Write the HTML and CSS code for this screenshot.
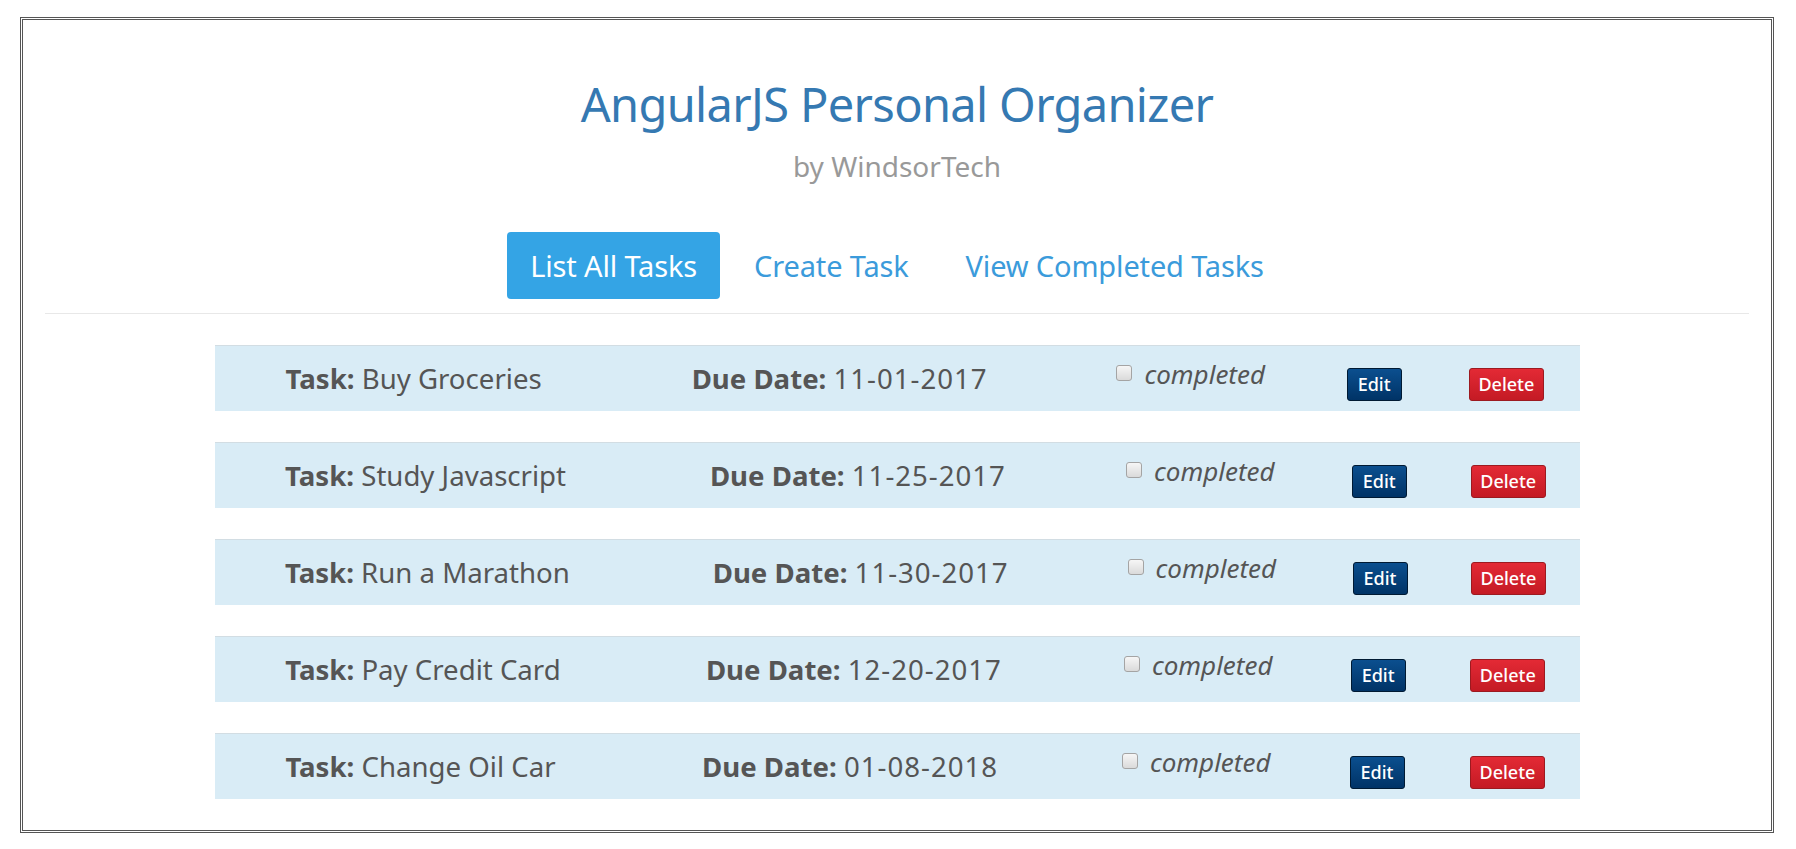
FILE: index.html
```html
<!DOCTYPE html>
<html lang="en">
<head>
<meta charset="utf-8">
<title>AngularJS Personal Organizer</title>
<link rel="stylesheet" href="styles.css">
</head>
<body>
<div class="frame">
  <header class="header">
    <h1 class="title">AngularJS Personal Organizer</h1>
    <p class="subtitle">by WindsorTech</p>
  </header>
  <nav class="nav">
    <a class="nav-link active">List All Tasks</a>
    <a class="nav-link">Create Task</a>
    <a class="nav-link">View Completed Tasks</a>
  </nav>
  <div class="tasks">
    <table class="task"><tr>
      <td class="c-name"><b>Task:</b> Buy Groceries</td>
      <td class="c-date"><b>Due Date:</b> <span class="date">11-01-2017</span></td>
      <td class="c-done"><label><input type="checkbox" class="check"><i>completed</i></label></td>
      <td class="c-btn"><button class="btn btn-edit">Edit</button></td>
      <td class="c-btn"><button class="btn btn-delete">Delete</button></td>
    </tr></table>
    <table class="task"><tr>
      <td class="c-name"><b>Task:</b> Study Javascript</td>
      <td class="c-date"><b>Due Date:</b> <span class="date">11-25-2017</span></td>
      <td class="c-done"><label><input type="checkbox" class="check"><i>completed</i></label></td>
      <td class="c-btn"><button class="btn btn-edit">Edit</button></td>
      <td class="c-btn"><button class="btn btn-delete">Delete</button></td>
    </tr></table>
    <table class="task"><tr>
      <td class="c-name"><b>Task:</b> Run a Marathon</td>
      <td class="c-date"><b>Due Date:</b> <span class="date">11-30-2017</span></td>
      <td class="c-done"><label><input type="checkbox" class="check"><i>completed</i></label></td>
      <td class="c-btn"><button class="btn btn-edit">Edit</button></td>
      <td class="c-btn"><button class="btn btn-delete">Delete</button></td>
    </tr></table>
    <table class="task"><tr>
      <td class="c-name"><b>Task:</b> Pay Credit Card</td>
      <td class="c-date"><b>Due Date:</b> <span class="date">12-20-2017</span></td>
      <td class="c-done"><label><input type="checkbox" class="check"><i>completed</i></label></td>
      <td class="c-btn"><button class="btn btn-edit">Edit</button></td>
      <td class="c-btn"><button class="btn btn-delete">Delete</button></td>
    </tr></table>
    <table class="task"><tr>
      <td class="c-name"><b>Task:</b> Change Oil Car</td>
      <td class="c-date"><b>Due Date:</b> <span class="date">01-08-2018</span></td>
      <td class="c-done"><label><input type="checkbox" class="check"><i>completed</i></label></td>
      <td class="c-btn"><button class="btn btn-edit">Edit</button></td>
      <td class="c-btn"><button class="btn btn-delete">Delete</button></td>
    </tr></table>
  </div>
</div>
</body>
</html>
```
FILE: styles.css
```css
html, body {
  margin: 0;
  padding: 0;
  background: #ffffff;
}
body {
  font-family: "Noto Sans", "Open Sans", sans-serif;
  color: #555555;
}
.frame {
  margin: 17px 22px 0 20px;
  border: 3px double #555555;
  padding: 55px 22px 31px;
}
.header {
  text-align: center;
}
.title {
  margin: 0;
  font-size: 47px;
  line-height: 58px;
  font-weight: 400;
  color: #3579b2;
  letter-spacing: -0.65px;
}
.subtitle {
  margin: 16px 0 0;
  font-size: 28px;
  line-height: 34px;
  color: #999999;
}
.nav {
  margin-top: 49px;
  display: flex;
  justify-content: center;
  gap: 11px;
  padding-bottom: 14px;
  border-bottom: 1px solid #e8e8e8;
}
.nav-link {
  display: block;
  height: 67px;
  line-height: 67px;
  padding: 0 23px;
  font-size: 29px;
  letter-spacing: -0.15px;
  color: #3b9bdb;
  border-radius: 4px;
  text-decoration: none;
}
.nav-link.active {
  background: #34a4e5;
  color: #ffffff;
}
.tasks {
  display: flex;
  flex-direction: column;
  gap: 31px;
  padding-top: 31px;
}
.task {
  width: 1365px;
  height: 66px;
  margin: 0 auto;
  border-collapse: collapse;
  background: #d9ecf6;
}
.task td {
  border-top: 1px solid #d2dde3;
  padding: 0 15px 2px;
  text-align: center;
  vertical-align: middle;
  white-space: nowrap;
  font-size: 27.6px;
  color: #555555;
}
.task b {
  font-weight: 700;
}
.date {
  letter-spacing: 1px;
}
.task td.c-done {
  padding-bottom: 10px;
  font-size: 26px;
}
.task td.c-btn {
  padding-top: 4px;
  padding-bottom: 0;
}
.check {
  -webkit-appearance: none;
  appearance: none;
  width: 16px;
  height: 16px;
  margin: 0 12px 0 0;
  border: 1px solid #a4a4a4;
  border-radius: 3px;
  background: linear-gradient(#f6f6f6, #dadada);
  vertical-align: 3px;
}
.btn {
  font-family: "Noto Sans", "Open Sans", sans-serif;
  font-size: 18px;
  font-weight: 500;
  height: 33px;
  padding: 0;
  color: #ffffff;
  border-radius: 3px;
  line-height: 31px;
  text-align: center;
}
.btn-edit {
  width: 55px;
  background: linear-gradient(#0b4f8f, #003366);
  border: 1px solid #001a33;
}
.btn-delete {
  width: 75px;
  background: linear-gradient(#e32a35, #c41a24);
  border: 1px solid #9c1a20;
}
```
